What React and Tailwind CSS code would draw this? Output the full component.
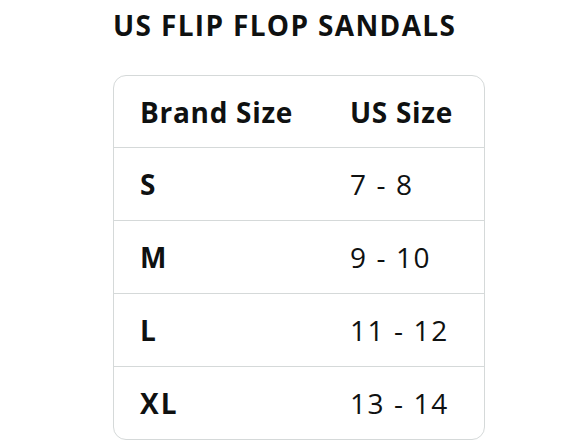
export default function App() {
  const rows = [
    ["S", "7 - 8"],
    ["M", "9 - 10"],
    ["L", "11 - 12"],
    ["XL", "13 - 14"],
  ];
  return (
    <div
      className="w-[588px] h-[441px] bg-white overflow-hidden text-[#0f1111]"
      style={{ fontFamily: '"Open Sans", "Noto Sans", sans-serif' }}
    >
      <div className="ml-[113px] w-[372px] pt-[6px]">
        <h1 className="text-[28px] leading-[38px] font-bold tracking-[1.35px]">US FLIP FLOP SANDALS</h1>
        <div className="mt-[31px] border border-[#d5d9d9] rounded-[13px] overflow-hidden">
          <div className="grid grid-cols-[210px_1fr] h-[72px] items-center pl-[26px] border-b border-[#d5d9d9] text-[28px] font-bold tracking-[0.7px]">
            <div>Brand Size</div>
            <div>US Size</div>
          </div>
          {rows.map(([a, b], i) => (
            <div
              key={a}
              className={
                i < rows.length - 1
                  ? "grid grid-cols-[210px_1fr] h-[73px] items-center pl-[26px] border-b border-[#d5d9d9] text-[28px]"
                  : "grid grid-cols-[210px_1fr] h-[72px] items-center pl-[26px] text-[28px]"
              }
            >
              <div className="font-bold tracking-[2px]">{a}</div>
              <div className="tracking-[1.6px]">{b}</div>
            </div>
          ))}
        </div>
      </div>
    </div>
  );
}
